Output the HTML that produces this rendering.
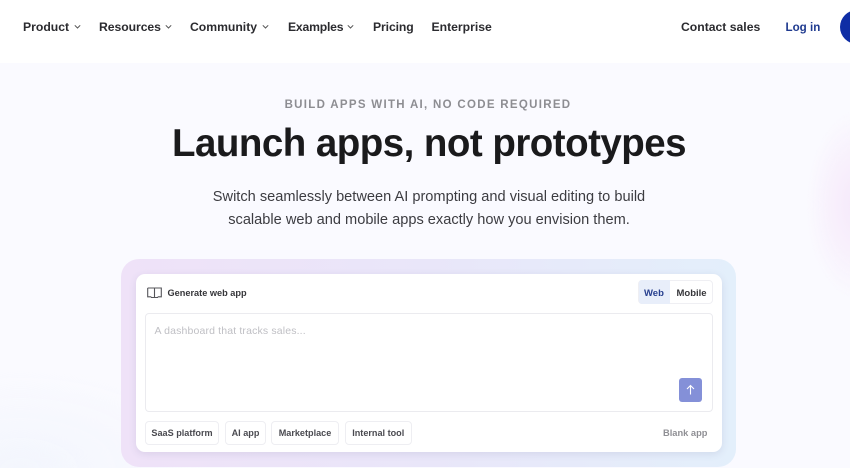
<!DOCTYPE html>
<html><head><meta charset="utf-8"><style>
*{box-sizing:border-box;margin:0;padding:0}
html,body{width:850px;height:468px;overflow:hidden;font-family:"Liberation Sans",sans-serif}
body{position:relative;background:radial-gradient(52px 95px at 858px 205px,#f5e8fa 0%,#f8f0fc 50%,rgba(250,250,255,0) 100%),radial-gradient(190px 100px at 20px 468px,#f3f6fd 0%,rgba(250,250,255,0) 100%),#fafaff}
.t{position:absolute;white-space:nowrap;line-height:1}
.nav{font-size:12.2px;font-weight:700;color:#2b2b2f;top:21px}
.chev{position:absolute;top:24px}
.chip{position:absolute;top:421px;height:24px;background:#fff;border:1px solid #eeeef2;border-radius:4px;font-size:9.1px;font-weight:700;color:#4a4a50;line-height:23px;text-align:center;white-space:nowrap}
</style></head><body>
<div style="position:absolute;left:0;top:0;width:850px;height:63px;background:#fff;overflow:hidden">
<div style="position:absolute;left:840px;top:10px;width:60px;height:34px;border-radius:17px;background:#0f2da5"></div>
</div>

<div class="t nav" style="left:23px">Product</div>
<svg class="chev" style="left:74px" width="7" height="6" viewBox="0 0 7 6" fill="none" stroke="#555" stroke-width="1"><path d="M.8 1.3 3.500 4 6.200 1.300"/></svg>
<div class="t nav" style="left:99px;letter-spacing:-.05px">Resources</div>
<svg class="chev" style="left:165px" width="7" height="6" viewBox="0 0 7 6" fill="none" stroke="#555" stroke-width="1"><path d="M.8 1.3 3.500 4 6.200 1.300"/></svg>
<div class="t nav" style="left:190px">Community</div>
<svg class="chev" style="left:262px" width="7" height="6" viewBox="0 0 7 6" fill="none" stroke="#555" stroke-width="1"><path d="M.8 1.3 3.500 4 6.200 1.300"/></svg>
<div class="t nav" style="left:288px;letter-spacing:-.2px">Examples</div>
<svg class="chev" style="left:347px" width="7" height="6" viewBox="0 0 7 6" fill="none" stroke="#555" stroke-width="1"><path d="M.8 1.3 3.500 4 6.200 1.300"/></svg>
<div class="t nav" style="left:373px;letter-spacing:-.1px">Pricing</div>
<div class="t nav" style="left:431.500px">Enterprise</div>
<div class="t nav" style="left:681px">Contact sales</div>
<div class="t nav" style="left:785.500px;top:22px;color:#1f3a8f;font-size:11.600px">Log in</div>

<div class="t" style="left:0;width:856px;text-align:center;top:99.500px;font-size:11.500px;font-weight:700;letter-spacing:1.300px;color:#8d8d92">BUILD APPS WITH AI, NO CODE REQUIRED</div>
<div class="t" style="left:0;width:858px;text-align:center;top:125px;font-size:38.500px;font-weight:700;letter-spacing:-.530px;color:#1a1a1c">Launch apps, not prototypes</div>
<div class="t" style="left:0;width:858px;text-align:center;top:186px;font-size:14.600px;color:#3c3c41;line-height:23px;white-space:normal">Switch seamlessly between AI prompting and visual editing to build<br>scalable web and mobile apps exactly how you envision them.</div>

<div style="position:absolute;left:121px;top:259px;width:615px;height:208px;border-radius:18px;background:linear-gradient(90deg,#efe2f8 0%,#e9e6f9 50%,#e3effb 100%)"></div>
<div style="position:absolute;left:136px;top:274px;width:586px;height:178px;border-radius:9px;background:#fff;box-shadow:0 2px 8px rgba(70,70,120,.12)"></div>

<svg style="position:absolute;left:147px;top:287px" width="15" height="13" viewBox="0 0 15 13" fill="none" stroke="#55555a" stroke-width="1.100"><path d="M.7 1h13.600v8.800h-3.300M.7 1v8.800h3.300M7.500 1v9.500M7.500 10.500H4.500V9.800M7.500 10.500h3V9.800"/></svg>
<div class="t" style="left:167.500px;top:288.500px;font-size:9.200px;font-weight:700;color:#36363a">Generate web app</div>

<div style="position:absolute;left:638px;top:280px;width:75px;height:24px;border:1px solid #efeff3;border-radius:4px;background:#fff"></div>
<div style="position:absolute;left:639px;top:280px;width:31px;height:24px;background:#e8eefa;border-radius:3px 0 0 3px"></div>
<div class="t" style="left:644px;top:288.500px;font-size:9.500px;font-weight:700;color:#28408f">Web</div>
<div class="t" style="left:676.500px;top:288.500px;font-size:9.500px;font-weight:700;color:#36363a">Mobile</div>

<div style="position:absolute;left:145px;top:313px;width:568px;height:99px;border:1px solid #ebebef;border-radius:4px;background:#fff"></div>
<div class="t" style="left:154.500px;top:325.500px;font-size:10.500px;color:#bfbfc4;letter-spacing:.15px">A dashboard that tracks sales...</div>

<div style="position:absolute;left:679px;top:378px;width:23px;height:24px;border-radius:3px;background:#8490d8"></div>
<svg style="position:absolute;left:684px;top:384px" width="13" height="12" viewBox="0 0 13 12" fill="none" stroke="#fff" stroke-width="1.100"><path d="M6.500 10.500V1.500M3 5l3.500-3.500L10 5"/></svg>

<div class="chip" style="left:145px;width:74px">SaaS platform</div>
<div class="chip" style="left:225px;width:41px">AI app</div>
<div class="chip" style="left:271px;width:68px">Marketplace</div>
<div class="chip" style="left:344.500px;width:67.500px">Internal tool</div>
<div class="t" style="left:663px;top:429px;font-size:9.300px;font-weight:700;color:#8f8f94">Blank app</div>
</body></html>
